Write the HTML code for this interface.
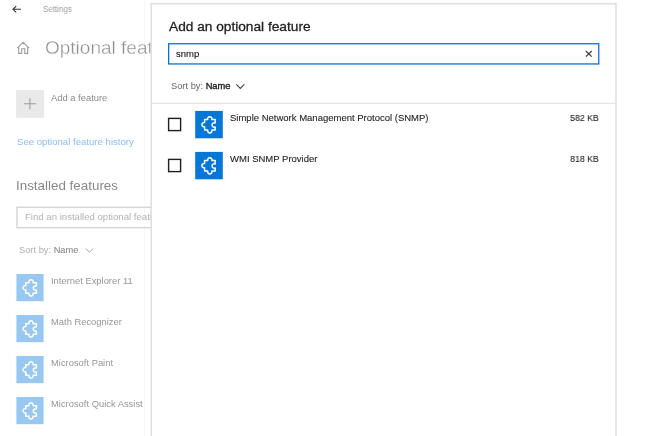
<!DOCTYPE html>
<html><head><meta charset="utf-8">
<style>
*{margin:0;padding:0;box-sizing:border-box}
html,body{width:650px;height:436px;overflow:hidden;background:#fff}
body{position:relative;font-family:"Liberation Sans",sans-serif}
.t{position:absolute;white-space:nowrap;line-height:1;will-change:transform}
.b{-webkit-text-stroke:0.1px currentColor}
svg{position:absolute;left:0;top:0}
#left{position:absolute;left:0;top:0;width:151px;height:436px;overflow:hidden}
</style></head><body>

<!-- LEFT (background settings page) -->
<div id="left">
<svg width="151" height="436" viewBox="0 0 151 436">
  <rect x="144" y="0" width="1" height="436" fill="#f8f8f8"/>
  <!-- back arrow -->
  <path d="M13 9.3 H21 M16.2 6.2 L13 9.3 L16.2 12.4" fill="none" stroke="#333" stroke-width="1.1"/>
  <!-- home -->
  <path d="M17.3 48.2 L23.2 42.3 L29.1 48.2 M18.7 46.6 V53.4 H21.7 V48.7 H24.8 V53.4 H27.7 V46.6" fill="none" stroke="#9c9c9c" stroke-width="1.1"/>
  <!-- add square -->
  <rect x="16.1" y="90.1" width="28" height="27.7" fill="#e9e9e9"/>
  <path d="M29.9 98.2 V109.4 M24 103.8 H36" stroke="#9c9c9c" stroke-width="1.05"/>
  <!-- input box -->
  <rect x="17" y="207.3" width="160" height="20.4" fill="none" stroke="#d6d6d6" stroke-width="1.5"/>
  <!-- chevron -->
  <path d="M85.6 248.5 L89.4 252.2 L93.2 248.5" fill="none" stroke="#a8a8a8" stroke-width="1"/>
  <!-- icons -->
  <g transform="translate(16.4,274)"><rect width="27.2" height="27.2" fill="#98c8f2"/><path d="M9.4 8.7 H12.5 A2.2 2.2 0 1 1 16.7 8.7 H20 V12.1 A2.2 2.2 0 1 0 20 16.1 V19.2 H16.7 A2.2 2.2 0 1 1 12.5 19.2 H9.4 V15.9 A2.2 2.2 0 1 1 9.4 11.6 Z" fill="none" stroke="#fff" stroke-width="1.5" stroke-linejoin="round"/></g>
  <g transform="translate(16.4,315)"><rect width="27.2" height="27.2" fill="#98c8f2"/><path d="M9.4 8.7 H12.5 A2.2 2.2 0 1 1 16.7 8.7 H20 V12.1 A2.2 2.2 0 1 0 20 16.1 V19.2 H16.7 A2.2 2.2 0 1 1 12.5 19.2 H9.4 V15.9 A2.2 2.2 0 1 1 9.4 11.6 Z" fill="none" stroke="#fff" stroke-width="1.5" stroke-linejoin="round"/></g>
  <g transform="translate(16.4,356)"><rect width="27.2" height="27.2" fill="#98c8f2"/><path d="M9.4 8.7 H12.5 A2.2 2.2 0 1 1 16.7 8.7 H20 V12.1 A2.2 2.2 0 1 0 20 16.1 V19.2 H16.7 A2.2 2.2 0 1 1 12.5 19.2 H9.4 V15.9 A2.2 2.2 0 1 1 9.4 11.6 Z" fill="none" stroke="#fff" stroke-width="1.5" stroke-linejoin="round"/></g>
  <g transform="translate(16.4,397)"><rect width="27.2" height="27.2" fill="#98c8f2"/><path d="M9.4 8.7 H12.5 A2.2 2.2 0 1 1 16.7 8.7 H20 V12.1 A2.2 2.2 0 1 0 20 16.1 V19.2 H16.7 A2.2 2.2 0 1 1 12.5 19.2 H9.4 V15.9 A2.2 2.2 0 1 1 9.4 11.6 Z" fill="none" stroke="#fff" stroke-width="1.5" stroke-linejoin="round"/></g>
</svg>
<div class="t" style="left:42.6px;top:5.4px;font-size:8.5px;color:#9c9c9c;transform:scaleX(0.94);transform-origin:left">Settings</div>
<div class="t" style="left:45px;top:38.1px;font-size:19px;color:#909090;-webkit-text-stroke:0.35px #fff">Optional feature</div>
<div class="t" style="left:51px;top:92.6px;font-size:9.4px;color:#8a8a8a">Add a feature</div>
<div class="t" style="left:16.5px;top:136.6px;font-size:9.6px;color:#8cbdeb">See optional feature history</div>
<div class="t" style="left:15.5px;top:178.8px;font-size:13.4px;color:#888">Installed features</div>
<div class="t" style="left:25px;top:211.9px;font-size:9.6px;color:#b3b3b3">Find an installed optional feature</div>
<div class="t" style="left:19px;top:245.9px;font-size:9.3px;color:#b0b0b0">Sort by: <span style="color:#8a8a8a;-webkit-text-stroke:0.1px #8a8a8a">Name</span></div>
<div class="t" style="left:51px;top:276.4px;font-size:9.4px;color:#969696">Internet Explorer 11</div>
<div class="t" style="left:51px;top:317.4px;font-size:9.4px;color:#969696">Math Recognizer</div>
<div class="t" style="left:51px;top:358.4px;font-size:9.4px;color:#969696">Microsoft Paint</div>
<div class="t" style="left:51px;top:399.4px;font-size:9.4px;color:#969696">Microsoft Quick Assist</div>
</div>

<!-- DIALOG -->
<svg width="650" height="436" viewBox="0 0 650 436">
  <rect x="151.2" y="3.7" width="464.8" height="440" fill="#fff" stroke="#e0e0e0" stroke-width="1.6"/>
  <!-- search box -->
  <rect x="168.65" y="43.75" width="430.1" height="20.2" fill="none" stroke="#0c70da" stroke-width="1.3"/>
  <path d="M585.9 51 L591.7 56.7 M591.7 51 L585.9 56.7" stroke="#3a3a3a" stroke-width="1.15"/>
  <!-- chevron -->
  <path d="M236.3 84.4 L240.3 88.4 L244.3 84.4" fill="none" stroke="#444" stroke-width="1.1"/>
  <!-- separator -->
  <rect x="151.2" y="102.9" width="464.8" height="1" fill="#e2e2e2"/>
  <!-- checkboxes -->
  <rect x="168.6" y="118.4" width="12" height="12.2" fill="none" stroke="#1e1e1e" stroke-width="1.4"/>
  <rect x="168.6" y="159.4" width="12" height="12.2" fill="none" stroke="#1e1e1e" stroke-width="1.4"/>
  <!-- icons -->
  <g transform="translate(195.2,110.9)"><rect width="27.6" height="27.4" fill="#0677d9"/><path d="M9.4 8.7 H12.5 A2.2 2.2 0 1 1 16.7 8.7 H20 V12.1 A2.2 2.2 0 1 0 20 16.1 V19.2 H16.7 A2.2 2.2 0 1 1 12.5 19.2 H9.4 V15.9 A2.2 2.2 0 1 1 9.4 11.6 Z" fill="none" stroke="#fff" stroke-width="1.5" stroke-linejoin="round"/></g>
  <g transform="translate(195.2,151.9)"><rect width="27.6" height="27.4" fill="#0677d9"/><path d="M9.4 8.7 H12.5 A2.2 2.2 0 1 1 16.7 8.7 H20 V12.1 A2.2 2.2 0 1 0 20 16.1 V19.2 H16.7 A2.2 2.2 0 1 1 12.5 19.2 H9.4 V15.9 A2.2 2.2 0 1 1 9.4 11.6 Z" fill="none" stroke="#fff" stroke-width="1.5" stroke-linejoin="round"/></g>
</svg>
<div class="t b" style="left:168.5px;top:19.6px;font-size:13.7px;color:#1e1e1e;-webkit-text-stroke:0.3px #1e1e1e">Add an optional feature</div>
<div class="t b" style="left:176px;top:48.6px;font-size:9.5px;color:#111">snmp</div>
<div class="t" style="left:171px;top:82.1px;font-size:9.3px;color:#666">Sort by: <span style="color:#222;-webkit-text-stroke:0.35px #222">Name</span></div>
<div class="t b" style="left:229.5px;top:112.6px;font-size:9.5px;color:#1e1e1e">Simple Network Management Protocol (SNMP)</div>
<div class="t b" style="right:51.2px;top:113.1px;font-size:9.4px;color:#1e1e1e;transform:scaleX(0.93);transform-origin:right">582 KB</div>
<div class="t b" style="left:229.5px;top:153.8px;font-size:9.5px;color:#1e1e1e">WMI SNMP Provider</div>
<div class="t b" style="right:51.2px;top:154.1px;font-size:9.4px;color:#1e1e1e;transform:scaleX(0.93);transform-origin:right">818 KB</div>

</body></html>
